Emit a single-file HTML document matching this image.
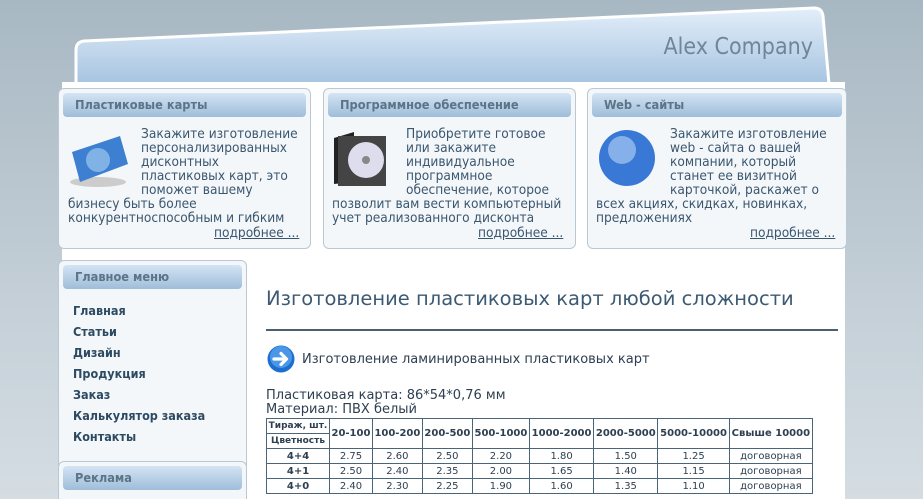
<!DOCTYPE html>
<html><head><meta charset="utf-8"><style>
*{margin:0;padding:0;box-sizing:border-box}
html,body{width:923px;height:499px;overflow:hidden}
body{background:linear-gradient(#a8b8c3,#c4cfd7 300px,#d5dde3);font-family:"DejaVu Sans","Liberation Sans",sans-serif;color:#2d4a63;position:relative}
.abs{position:absolute}
.box{position:absolute;background:#f4f7f9;border:1px solid #b9c8d3;border-radius:6px}
.bh{position:absolute;left:4px;right:4px;top:4px;height:24px;border-radius:4px;background:linear-gradient(#d3e4f4,#9fbdd9);font:bold 12.7px "DejaVu Sans Condensed","DejaVu Sans",sans-serif;color:#5d7486;padding:4px 12px}
.bt{position:absolute;font:13.6px "DejaVu Sans Condensed","DejaVu Sans",sans-serif;color:#3a566f;line-height:14px;white-space:nowrap}
.more{position:absolute;font:13.6px "DejaVu Sans Condensed",sans-serif;color:#3a566f;text-decoration:underline}
table{border-collapse:collapse;font-size:10px;white-space:nowrap}
td{border:1px solid #4a6478;text-align:center;height:15px;padding:0 1px}
.menu a{display:block;font:bold 12.5px "DejaVu Sans Condensed",sans-serif;color:#2d4a63;height:21px}
</style></head><body>
<svg class="abs" style="left:0;top:0" width="923" height="90">
<defs><linearGradient id="g" x1="0" y1="0" x2="0" y2="1"><stop offset="0" stop-color="#e3eefa"/><stop offset="1" stop-color="#a6c4e0"/></linearGradient></defs>
<path d="M76,84 L76,50 Q76,42 84,41 L814,8 Q822,8 823,16 L829,84 Z" fill="url(#g)" stroke="#fff" stroke-width="3"/>
<text x="813" y="54" text-anchor="end" font-family="DejaVu Sans Condensed,sans-serif" font-size="23" fill="#6f8598">Alex Company</text>
</svg>
<div class="abs" style="left:62px;top:82px;width:783px;height:417px;background:#fff"></div>

<div class="box" style="left:58px;top:88px;width:253px;height:161px">
<div class="bh">Пластиковые карты</div></div>
<svg class="abs" style="left:68px;top:130px" width="62" height="60"><ellipse cx="30" cy="52" rx="28" ry="5" fill="#ccc"/><path d="M4,22 L52,6 L60,34 L12,52 Z" fill="#3d7fd0"/><circle cx="30" cy="30" r="12" fill="#9cc7f0" opacity=".7"/></svg>
<div class="bt" style="left:141px;top:127px">Закажите изготовление<br>персонализированных<br>дисконтных<br>пластиковых карт, это<br>поможет вашему</div>
<div class="bt" style="left:68px;top:197px">бизнесу быть более<br>конкурентноспособным и гибким</div>
<div class="more" style="left:214px;top:225px">подробнее ...</div>

<div class="box" style="left:323px;top:88px;width:253px;height:161px">
<div class="bh">Программное обеспечение</div></div>
<svg class="abs" style="left:332px;top:130px" width="62" height="60"><path d="M2,8 L22,2 L22,52 L2,54 Z" fill="#222"/><rect x="6" y="6" width="48" height="50" fill="#444"/><circle cx="34" cy="30" r="18" fill="#dde" /><circle cx="34" cy="30" r="4" fill="#888"/></svg>
<div class="bt" style="left:406px;top:127px">Приобретите готовое<br>или закажите<br>индивидуальное<br>программное<br>обеспечение, которое</div>
<div class="bt" style="left:332px;top:197px">позволит вам вести компьютерный<br>учет реализованного дисконта</div>
<div class="more" style="left:478px;top:225px">подробнее ...</div>

<div class="box" style="left:587px;top:88px;width:260px;height:161px">
<div class="bh">Web - сайты</div></div>
<svg class="abs" style="left:598px;top:128px" width="58" height="64"><circle cx="29" cy="30" r="28" fill="#3a78d6"/><circle cx="24" cy="22" r="14" fill="#b9d6f7" opacity=".6"/></svg>
<div class="bt" style="left:670px;top:127px">Закажите изготовление<br>web - сайта о вашей<br>компании, который<br>станет ее визитной<br>карточкой, раскажет о</div>
<div class="bt" style="left:596px;top:197px">всех акциях, скидках, новинках,<br>предложениях</div>
<div class="more" style="left:750px;top:225px">подробнее ...</div>

<div class="box" style="left:58px;top:260px;width:189px;height:225px">
<div class="bh" style="padding-left:12px">Главное меню</div>
<div class="menu" style="position:absolute;left:14px;top:42px">
<a>Главная</a><a>Статьи</a><a>Дизайн</a><a>Продукция</a><a>Заказ</a><a>Калькулятор заказа</a><a>Контакты</a></div></div>
<div class="box" style="left:58px;top:461px;width:189px;height:50px">
<div class="bh">Реклама</div></div>

<div class="abs" style="left:266px;top:287px;font-size:19.5px;color:#3d5a74;white-space:nowrap">Изготовление пластиковых карт любой сложности</div>
<div class="abs" style="left:266px;top:329px;width:572px;height:2px;background:#4a5f70"></div>
<svg class="abs" style="left:267px;top:345px" width="30" height="30"><circle cx="14" cy="14" r="13.5" fill="#1d6fcf"/><circle cx="14" cy="12" r="11" fill="#4a97e8"/><path d="M7,14 H19 M14,8.5 L19.5,14 L14,19.5" stroke="#fff" stroke-width="3.2" fill="none" stroke-linecap="round" stroke-linejoin="round"/></svg>
<div class="abs" style="left:302px;top:352px;font-size:13px;color:#2d3f50;white-space:nowrap">Изготовление ламинированных пластиковых карт</div>
<div class="abs" style="left:266px;top:389px;font-size:13px;line-height:14px;color:#2d3f50">Пластиковая карта: 86*54*0,76 мм<br>Материал: ПВХ белый</div>
<table class="abs" style="left:266px;top:418px;width:547px;color:#2d3f50">
<tr><td style="font-weight:bold;font-size:9px">Тираж, шт.</td><td rowspan="2" style="font-weight:bold">20-100</td><td rowspan="2" style="font-weight:bold">100-200</td><td rowspan="2" style="font-weight:bold">200-500</td><td rowspan="2" style="font-weight:bold">500-1000</td><td rowspan="2" style="font-weight:bold">1000-2000</td><td rowspan="2" style="font-weight:bold">2000-5000</td><td rowspan="2" style="font-weight:bold">5000-10000</td><td rowspan="2" style="font-weight:bold">Свыше 10000</td></tr>
<tr><td style="font-weight:bold;font-size:9px">Цветность</td></tr>
<tr><td style="font-weight:bold">4+4</td><td>2.75</td><td>2.60</td><td>2.50</td><td>2.20</td><td>1.80</td><td>1.50</td><td>1.25</td><td>договорная</td></tr>
<tr><td style="font-weight:bold">4+1</td><td>2.50</td><td>2.40</td><td>2.35</td><td>2.00</td><td>1.65</td><td>1.40</td><td>1.15</td><td>договорная</td></tr>
<tr><td style="font-weight:bold">4+0</td><td>2.40</td><td>2.30</td><td>2.25</td><td>1.90</td><td>1.60</td><td>1.35</td><td>1.10</td><td>договорная</td></tr>
</table>
</body></html>
